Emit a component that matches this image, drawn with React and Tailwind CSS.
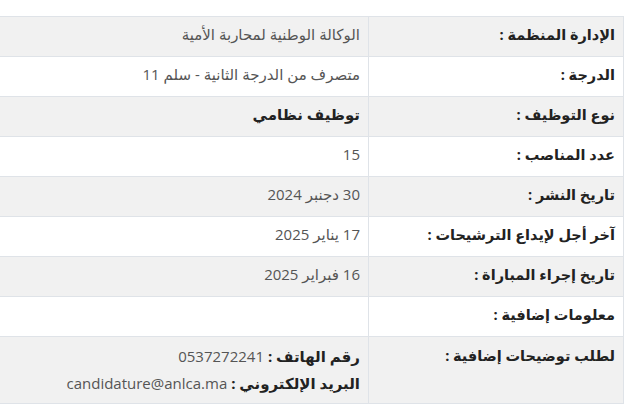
import React from 'react'

const rows = [
    { label: 'الإدارة المنظمة :', value: 'الوكالة الوطنية لمحاربة الأمية' },
    { label: 'الدرجة :', value: 'متصرف من الدرجة الثانية - سلم 11' },
    { label: 'نوع التوظيف :', value: 'توظيف نظامي', bold: true },
    { label: 'عدد المناصب :', value: '15' },
    { label: 'تاريخ النشر :', value: '30 دجنبر 2024' },
    { label: 'آخر أجل لإيداع الترشيحات :', value: '17 يناير 2025' },
    { label: 'تاريخ إجراء المباراة :', value: '16 فبراير 2025' },
    { label: 'معلومات إضافية :', value: '' },
]

const App = () => {
    return (
        <div dir="rtl" className="w-[640px] h-[418px] overflow-hidden bg-white pt-4 pr-4 font-['Open_Sans','DejaVu_Sans',sans-serif]">
            <table className="w-[690px] border-collapse border border-[#dfe3e8]">
                <tbody>
                    {rows.map((row, index) => (
                        <tr key={index} className={index % 2 === 0 ? 'bg-[#f1f1f1] h-10' : 'bg-white h-10'}>
                            <td className="w-[255px] border border-[#dfe3e8] px-2 pb-1 align-middle text-right text-[14.5px] font-bold text-[#222]">{row.label}</td>
                            <td className={row.bold ? 'border border-[#dfe3e8] px-2 pb-1 align-middle text-right text-[15px] font-bold text-[#222]' : 'border border-[#dfe3e8] px-2 pb-1 align-middle text-right text-[15px] text-[#555]'}>{row.value}</td>
                        </tr>
                    ))}
                    <tr className="bg-[#f1f1f1]">
                        <td className="w-[255px] border border-[#dfe3e8] px-2 pt-[8px] align-top text-right text-[14.5px] font-bold text-[#222] leading-[22px]">لطلب توضيحات إضافية :</td>
                        <td className="border border-[#dfe3e8] px-2 pt-[6px] pb-[6px] align-top text-right text-[15px] text-[#555] leading-[27px]">
                            <div><span className="font-bold text-[#222]">رقم الهاتف : </span>0537272241</div>
                            <div><span className="font-bold text-[#222]">البريد الإلكتروني : </span>candidature@anlca.ma</div>
                        </td>
                    </tr>
                </tbody>
            </table>
        </div>
    )
}

export default App
